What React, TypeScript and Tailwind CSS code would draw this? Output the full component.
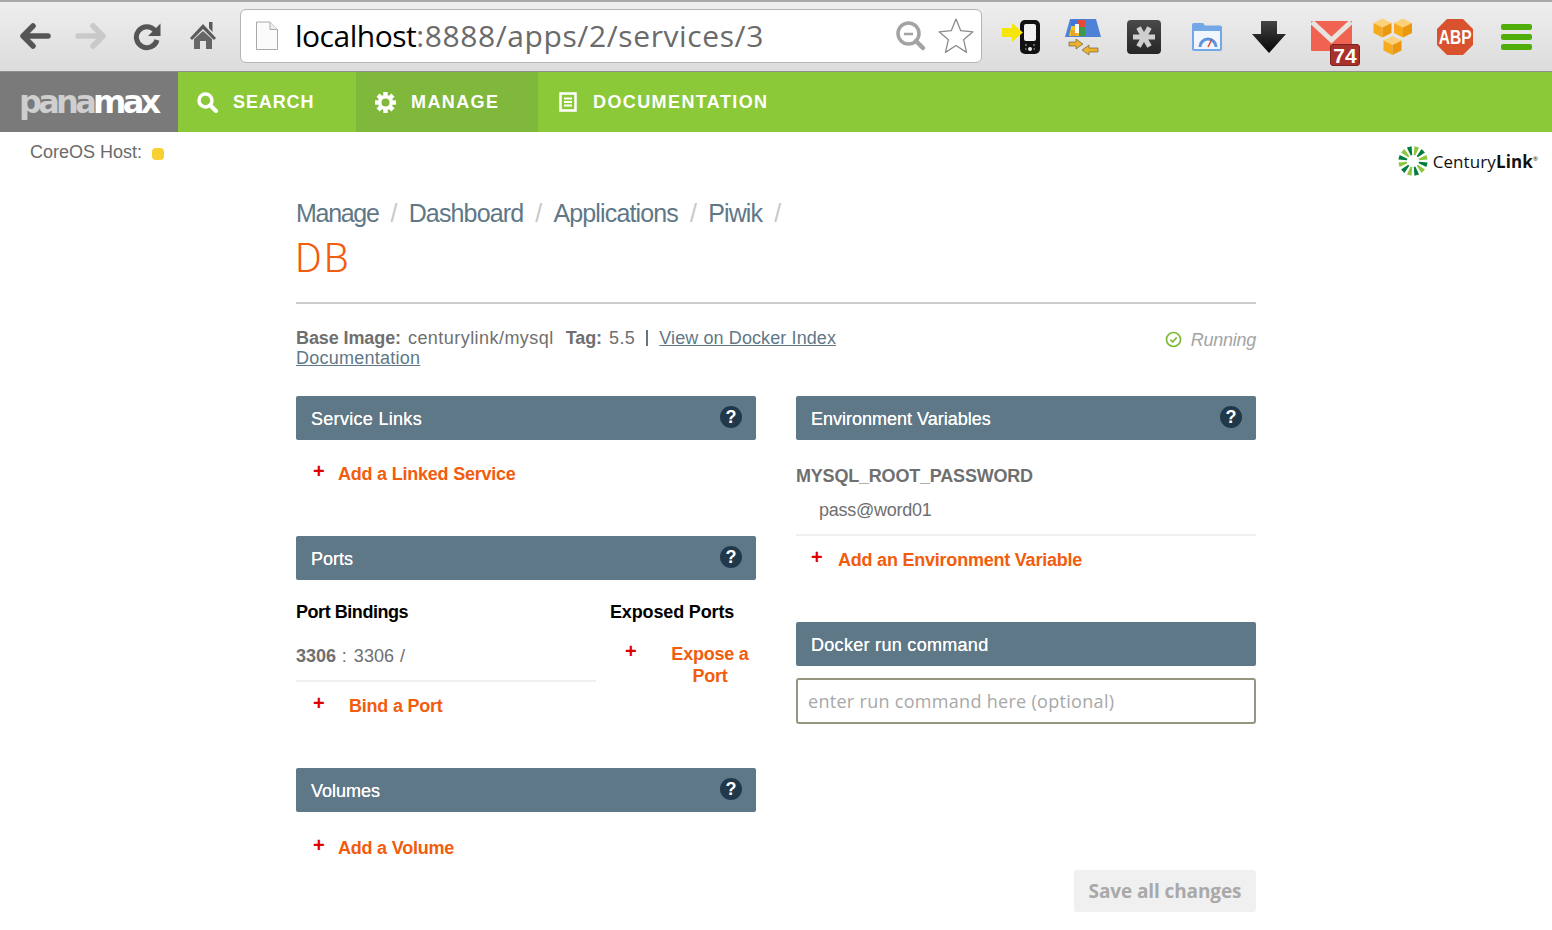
const sans = "font-['Liberation_Sans',Arial,sans-serif]";

function BackArrow({ color }: { color: string }) {
  return (
    <svg width="34" height="30" viewBox="0 0 34 30" fill="none">
      <path d="M15 5 L5 15 L15 25 M6 15 H30" stroke={color} strokeWidth="5.5" strokeLinecap="round" strokeLinejoin="round" />
    </svg>
  );
}

function ForwardArrow() {
  return (
    <svg width="34" height="30" viewBox="0 0 34 30" fill="none">
      <path d="M19 5 L29 15 L19 25 M28 15 H4" stroke="#c9c9c9" strokeWidth="5.5" strokeLinecap="round" strokeLinejoin="round" />
    </svg>
  );
}

function Reload() {
  return (
    <svg width="30" height="30" viewBox="0 0 30 30" fill="none">
      <path d="M23 9.5 A10.5 10.5 0 1 0 25 19" stroke="#555" strokeWidth="5" />
      <path d="M28.5 2.5 V15 H16 Z" fill="#555" />
    </svg>
  );
}

function Home() {
  return (
    <svg width="28" height="30" viewBox="0 0 28 30">
      <path d="M14 3 L27 17 L25 19 L14 8 L3 19 L1 17 Z" fill="#5a5a5a" />
      <path d="M20 1 H23.5 V11 L20 7 Z" fill="#5a5a5a" />
      <path d="M5 18 L14 10 L23 18 V28 H17 V20 H11 V28 H5 Z" fill="#666" />
    </svg>
  );
}

function PageIcon() {
  return (
    <svg width="24" height="30" viewBox="0 0 24 30" fill="none">
      <path d="M1.5 1 H15 L22.5 8.5 V28.5 H1.5 Z" fill="#fbfbfb" stroke="#aaa" />
      <path d="M15 1 V8.5 H22.5" fill="#eee" stroke="#aaa" />
    </svg>
  );
}

function ZoomOut() {
  return (
    <svg width="32" height="32" viewBox="0 0 32 32" fill="none">
      <circle cx="13.5" cy="13.5" r="10.5" stroke="#a3a3a3" strokeWidth="3.5" />
      <path d="M9 14 H18" stroke="#a3a3a3" strokeWidth="2.5" />
      <path d="M21 21 L28 28" stroke="#a3a3a3" strokeWidth="4.5" strokeLinecap="round" />
    </svg>
  );
}

function StarOutline() {
  return (
    <svg width="38" height="38" viewBox="0 0 36 36" fill="#fff">
      <path d="M18 2 L22.5 13 L34 14 L25.2 21.5 L28 33.5 L18 27 L8 33.5 L10.8 21.5 L2 14 L13.5 13 Z" stroke="#8a8a8a" strokeWidth="1.2" strokeLinejoin="round" />
    </svg>
  );
}

function PhoneIcon() {
  return (
    <svg width="40" height="36" viewBox="0 0 40 36">
      <rect x="19" y="1" width="20" height="34" rx="5" fill="#111" />
      <rect x="23" y="5" width="12" height="17" rx="2" fill="#f1f1f1" />
      <circle cx="29" cy="30" r="2" fill="#eee" />
      <path d="M24 26 H26 M32 26 H34 M24 30 H25.5 M32.5 30 H34" stroke="#bbb" strokeWidth="1.2" />
      <path d="M1 9 H11 V4 L22 13.5 L11 23 V18 H1 Z" fill="#f5e607" />
    </svg>
  );
}

function TranslateIcon() {
  return (
    <svg width="40" height="38" viewBox="0 0 40 38">
      <path d="M7 1 H33 L38 19 H2 Z" fill="#4f82d6" />
      <path d="M8 2 H19 V8 H14 V12 H19 V18 H6 L8 10 Z" fill="#f3c423" />
      <rect x="8" y="2" width="7" height="6" fill="#3f78d8" />
      <rect x="15" y="2" width="7" height="7" fill="#e24b3a" />
      <rect x="8" y="12" width="6" height="6" fill="#e9a52a" />
      <rect x="16" y="9" width="6" height="9" fill="#3e9a48" />
      <rect x="12" y="6" width="4" height="9" fill="#fff" />
      <path d="M6 24 H13 V21 L20 26 L13 31 V28 H6 Z" fill="#edb12b" stroke="#555" strokeWidth=".6" />
      <path d="M35 30 H26 V27 L19 32 L26 37 V34 H35 Z" fill="#edb12b" stroke="#555" strokeWidth=".6" />
    </svg>
  );
}

function AsteriskBox() {
  return (
    <svg width="36" height="36" viewBox="0 0 36 36">
      <defs>
        <linearGradient id="box" x1="0" y1="0" x2="0" y2="1">
          <stop offset="0" stopColor="#4a4a4a" />
          <stop offset="1" stopColor="#262626" />
        </linearGradient>
      </defs>
      <rect x="1" y="1" width="34" height="34" rx="4" fill="url(#box)" />
      <path d="M7 18 H29 M12.5 8.5 L23.5 27.5 M23.5 8.5 L12.5 27.5" stroke="#cfcfcf" strokeWidth="5" />
    </svg>
  );
}

function SpeedWindow() {
  return (
    <svg width="32" height="30" viewBox="0 0 32 30" fill="none">
      <path d="M1 3 Q1 1 3 1 H12 L14 3.5 H29 Q31 3.5 31 5.5 V27 Q31 29 29 29 H3 Q1 29 1 27 Z" fill="#73a7e6" />
      <rect x="3" y="9" width="26" height="18" fill="#f0f6fd" />
      <path d="M9 25 A8 8 0 0 1 25 25" stroke="#5d93d9" strokeWidth="3" />
      <path d="M17 25 L21 17" stroke="#d9503c" strokeWidth="1.5" />
    </svg>
  );
}

function DownArrow() {
  return (
    <svg width="36" height="34" viewBox="0 0 36 34">
      <defs>
        <linearGradient id="down" x1="0" y1="0" x2="0" y2="1">
          <stop offset="0" stopColor="#444" />
          <stop offset="1" stopColor="#050505" />
        </linearGradient>
      </defs>
      <path d="M10 1 H26 V14 H35 L18 33 L1 14 H10 Z" fill="url(#down)" />
    </svg>
  );
}

function MailIcon() {
  return (
    <div className="relative w-[50px] h-[45px]">
      <svg width="41" height="31" viewBox="0 0 41 31" className="absolute left-0 top-0">
        <rect x="0" y="0" width="41" height="30" rx="1" fill="#ef6350" />
        <path d="M1 1 L20.5 19 L40 1" fill="none" stroke="#e8e3df" strokeWidth="5" />
      </svg>
      <div className={`absolute left-[19px] top-[23px] w-[30px] h-[22px] rounded-[3px] bg-[#a8322b] border border-[#7d2420] flex items-center justify-center text-white text-[21px] font-bold leading-none ${sans}`}>
        74
      </div>
    </div>
  );
}

function AwsBoxes() {
  const box = (x: number, y: number) => (
    <g key={`${x}-${y}`} transform={`translate(${x} ${y})`}>
      <path d="M0 4.5 L9 0 L18 4.5 L9 9 Z" fill="#fbd27a" />
      <path d="M0 4.5 L9 9 V19 L0 14.5 Z" fill="#f6ab1c" />
      <path d="M18 4.5 L9 9 V19 L18 14.5 Z" fill="#eb980f" />
    </g>
  );
  return (
    <svg width="40" height="38" viewBox="0 0 40 38">
      {box(0.5, 0.5)}
      {box(21, 0.5)}
      {box(10.5, 18)}
    </svg>
  );
}

function AbpIcon() {
  return (
    <div className={`relative w-[38px] h-[38px] flex items-center justify-center text-white text-[21px] font-bold ${sans}`}>
      <svg width="38" height="38" viewBox="0 0 38 38" className="absolute inset-0">
        <path d="M11 1 H27 L37 11 V27 L27 37 H11 L1 27 V11 Z" fill="#d9522e" />
      </svg>
      <span className="relative scale-x-[0.74]">ABP</span>
    </div>
  );
}

function MenuIcon() {
  return (
    <div className="flex flex-col gap-[4px] w-[31px]">
      <div className="h-[6px] rounded-[2px] bg-[#4fae0a]" />
      <div className="h-[6px] rounded-[2px] bg-[#4fae0a]" />
      <div className="h-[6px] rounded-[2px] bg-[#4fae0a]" />
    </div>
  );
}

function BrowserBar() {
  return (
    <div className="relative h-[72px] border-b border-[#8e8e8e] bg-gradient-to-b from-[#eeeeee] to-[#dcdcdc] border-t-2 border-t-[#a9a9a9] flex items-center">
      <div className="flex items-center w-[240px] pl-[18px] -mt-[1px]">
        <BackArrow color="#555555" />
        <div className="ml-[22px]"><ForwardArrow /></div>
        <div className="ml-[24px]"><Reload /></div>
        <div className="ml-[27px]"><Home /></div>
      </div>
      <div className="w-[742px] h-[54px] -mt-[1px] rounded-[6px] border border-[#b4b4b4] bg-white flex items-center pl-[14px] pr-[6px]">
        <PageIcon />
        <div className="ml-[16px] text-[30px] tracking-[0.6px] leading-none font-['Open_Sans',sans-serif] text-[#6a6a6a] flex-1">
          <span className="text-black tracking-[-0.5px]">localhost</span>:8888/apps/2/services/3
        </div>
        <ZoomOut />
        <div className="ml-[10px]"><StarOutline /></div>
      </div>
      <div className="flex-1 flex items-center pl-[19px]">
        <PhoneIcon />
        <div className="ml-[22px]"><TranslateIcon /></div>
        <div className="ml-[23px]"><AsteriskBox /></div>
        <div className="ml-[29px]"><SpeedWindow /></div>
        <div className="ml-[28px]"><DownArrow /></div>
        <div className="ml-[24px] -mb-[14px]"><MailIcon /></div>
        <div className="ml-[12px]"><AwsBoxes /></div>
        <div className="ml-[23px]"><AbpIcon /></div>
        <div className="ml-[27px]"><MenuIcon /></div>
      </div>
    </div>
  );
}

function SearchGlyph() {
  return (
    <svg width="21" height="21" viewBox="0 0 21 21" fill="none">
      <circle cx="8.5" cy="8.5" r="6.5" stroke="#fff" strokeWidth="3.5" />
      <path d="M13.5 13.5 L19 19" stroke="#fff" strokeWidth="4" strokeLinecap="round" />
    </svg>
  );
}

function GearGlyph() {
  const teeth = [0, 45, 90, 135, 180, 225, 270, 315];
  return (
    <svg width="21" height="21" viewBox="-10.5 -10.5 21 21" fill="none">
      <circle r="5.8" stroke="#fff" strokeWidth="3.6" />
      {teeth.map((a) => (
        <rect key={a} x="-2.2" y="-10.5" width="4.4" height="4" fill="#fff" transform={`rotate(${a})`} />
      ))}
    </svg>
  );
}

function DocIcon() {
  return (
    <svg width="20" height="20" viewBox="0 0 20 20" fill="none">
      <rect x="2.5" y="1.5" width="15" height="17" stroke="#fff" strokeWidth="2.5" />
      <path d="M6 6.5 H14 M6 10 H14 M6 13.5 H14" stroke="#fff" strokeWidth="2" />
    </svg>
  );
}

function TopNav() {
  return (
    <nav className={`h-[60px] bg-[#8cc938] flex text-white text-[18px] font-bold tracking-[1.4px] ${sans}`}>
      <div className="w-[178px] bg-[#7a7a7a] flex items-center pl-[19px]">
        <span className="text-[32px] leading-none tracking-[-3.7px] font-['DejaVu_Sans',sans-serif] font-bold text-white">
          <span className="text-[#cfcfcf]">pana</span>max
        </span>
      </div>
      <div className="w-[178px] flex items-center pl-[19px] gap-[15px]">
        <SearchGlyph />
        <span className="tracking-[0.9px]">SEARCH</span>
      </div>
      <div className="w-[182px] bg-[#7fb83a] flex items-center pl-[19px] gap-[15px]">
        <GearGlyph />
        <span>MANAGE</span>
      </div>
      <div className="flex items-center pl-[20px] gap-[15px]">
        <DocIcon />
        <span>DOCUMENTATION</span>
      </div>
    </nav>
  );
}

function CenturyLogo() {
  const rays = Array.from({ length: 12 }, (_, i) => i * 30 + 15);
  return (
    <div className="flex items-center gap-[5px]">
      <svg width="30" height="30" viewBox="-15 -15 30 30">
        {rays.map((a, i) => (
          <path
            key={a}
            d="M-2.4 -14.5 H2.4 L0.8 -6 H-0.8 Z"
            fill={i % 2 === 0 ? "#8cc63f" : "#007c3e"}
            transform={`rotate(${a})`}
          />
        ))}
      </svg>
      <span className="text-[17px] tracking-[0.1px] leading-none text-[#111] font-['Open_Sans',sans-serif]">
        Century<span className="font-bold">Link</span>
        <span className="text-[6px] align-super">®</span>
      </span>
    </div>
  );
}

function HelpDot() {
  return (
    <span className={`w-[22px] h-[22px] rounded-full bg-[#20384a] text-white text-[18px] font-bold leading-none flex items-center justify-center -mt-[2px] ${sans}`}>
      ?
    </span>
  );
}

function PanelHeader({ title, help = true, wide = false }: { title: string; help?: boolean; wide?: boolean }) {
  return (
    <div className="h-[44px] rounded-[2px] bg-[#5f7887] pl-[15px] pr-[14px] flex items-center justify-between text-white text-[18px]">
      <span className={`pt-[3px] [text-shadow:0_0_0.5px_#fff] ${wide ? "tracking-[0.3px]" : "tracking-[0px]"}`}>{title}</span>
      {help && <HelpDot />}
    </div>
  );
}

function AddLink({ label, gap, className = "" }: { label: string; gap: string; className?: string }) {
  return (
    <div className={`flex items-start text-[#f25c0d] font-bold text-[18px] tracking-[-0.22px] leading-[22px] ${className}`}>
      <span className={`text-[#e00000] text-[20px] leading-[16px] ${gap}`}>+</span>
      <span>{label}</span>
    </div>
  );
}

export default function App() {
  return (
    <div className={`h-[930px] overflow-hidden bg-white ${sans}`}>
      <BrowserBar />
      <TopNav />

      <div className="flex justify-between h-[66px] pl-[30px] pr-[14px]">
        <div className="flex items-center h-[40px] text-[18px] tracking-[0px] text-[#6a6a6a]">
          CoreOS Host:
          <span className="ml-[10px] mt-[3px] w-[12px] h-[12px] rounded-[4px] bg-[#f8d02f]" />
        </div>
        <div className="mt-[14px]"><CenturyLogo /></div>
      </div>

      <main className="w-[960px] mx-auto">
        <div className="flex h-[32px] items-center text-[25px] tracking-[-0.85px] text-[#5f7887]">
          <span className="tracking-[-1.3px]">Manage</span>
          <span className="mx-[12px] text-[#c8c8c8]">/</span>
          <span>Dashboard</span>
          <span className="mx-[12px] text-[#c8c8c8]">/</span>
          <span>Applications</span>
          <span className="mx-[12px] text-[#c8c8c8]">/</span>
          <span>Piwik</span>
          <span className="mx-[12px] text-[#c8c8c8]">/</span>
        </div>
        <h1 className="h-[56px] pt-[4px] -ml-[1px] text-[41px] leading-[48px] tracking-[2px] font-['Roboto',sans-serif] font-light text-[#f25c0d]">DB</h1>
        <div className="h-[2px] mt-[16px] bg-[#cccccc]" />

        <div className="flex justify-between mt-[24px] h-[68px] text-[18px] leading-[20px] text-[#6f6f6f]">
          <div>
            <div className="flex">
              <b className="font-bold tracking-[-0.1px]">Base Image:</b>
              <span className="ml-[7px] tracking-[0.45px]">centurylink/mysql</span>
              <b className="font-bold ml-[12px] tracking-[-0.1px]">Tag:</b>
              <span className="ml-[7px] tracking-[0.45px]">5.5</span>
              <span className="w-[2px] h-[16px] mt-[2px] bg-[#5f7887] mx-[11px]" />
              <a className="text-[#5f7887] underline tracking-[0.1px]">View on Docker Index</a>
            </div>
            <a className="text-[#5f7887] underline tracking-[0.25px]">Documentation</a>
          </div>
          <div className="flex items-start gap-[9px] pt-[2px] italic text-[#a3a3a3] tracking-[-0.25px]">
            <svg width="17" height="17" viewBox="0 0 17 17" fill="none" className="mt-[1px]">
              <circle cx="8.5" cy="8.5" r="7" stroke="#7fbb3a" strokeWidth="1.7" />
              <path d="M5.3 8.7 L7.7 11 L11.7 6.4" stroke="#7fbb3a" strokeWidth="1.7" />
            </svg>
            Running
          </div>
        </div>

        <div className="grid grid-cols-2 gap-x-[40px]">
          <section>
            <PanelHeader title="Service Links" wide />
            <AddLink label="Add a Linked Service" gap="w-[25px]" className="mt-[23px] ml-[17px]" />

            <div className="mt-[51px]"><PanelHeader title="Ports" /></div>
            <div className="flex mt-[21px]">
              <div className="w-[314px]">
                <div className="text-[18px] leading-[22px] font-bold tracking-[-0.45px] text-black">Port Bindings</div>
                <div className="flex w-[300px] h-[48px] mt-[11px] pt-[11px] border-b-2 border-[#f0f0f0] text-[18px] leading-[22px] text-[#6f6f6f]">
                  <b className="tracking-[-0.05px]">3306</b>
                  <span className="ml-[6px]">:</span>
                  <span className="ml-[7px] tracking-[0.05px]">3306</span>
                  <span className="ml-[6px]">/</span>
                </div>
                <AddLink label="Bind a Port" gap="w-[36px]" className="mt-[13px] ml-[17px]" />
              </div>
              <div className="flex-1">
                <div className="text-[18px] leading-[22px] font-bold tracking-[-0.15px] text-black">Exposed Ports</div>
                <div className="flex items-start mt-[20px] pl-[15px] text-[#f25c0d] font-bold text-[18px] leading-[22px] tracking-[-0.22px]">
                  <span className="text-[#e00000] text-[20px] leading-[16px] w-[39px]">+</span>
                  <span className="flex-1 text-center">Expose a Port</span>
                </div>
              </div>
            </div>

            <div className="mt-[51px]"><PanelHeader title="Volumes" /></div>
            <AddLink label="Add a Volume" gap="w-[25px]" className="mt-[25px] ml-[17px]" />
          </section>

          <section>
            <PanelHeader title="Environment Variables" />
            <div className="mt-[25px] text-[18px] leading-[22px] font-bold tracking-[-0.2px] text-[#6f6f6f]">MYSQL_ROOT_PASSWORD</div>
            <div className="h-[37px] mt-[12px] pl-[23px] border-b-2 border-[#f0f0f0] text-[18px] leading-[22px] tracking-[-0.25px] text-[#6f6f6f]">pass@word01</div>
            <AddLink label="Add an Environment Variable" gap="w-[27px]" className="mt-[13px] ml-[15px]" />

            <div className="mt-[51px]"><PanelHeader title="Docker run command" help={false} wide /></div>
            <input
              readOnly
              placeholder="enter run command here (optional)"
              className="block w-full h-[46px] mt-[12px] px-[10px] rounded-[3px] border-2 border-[#96957f] bg-white text-[18px] tracking-[0.3px] font-['Open_Sans',sans-serif] placeholder:text-[#a8a8a8]"
            />
            <div className="flex justify-end mt-[146px]">
              <button className="w-[182px] h-[42px] rounded-[3px] bg-[#f0f0f0] text-[#a9a9a9] text-[19px] font-bold tracking-[-0.1px] font-['Open_Sans',sans-serif]">
                Save all changes
              </button>
            </div>
          </section>
        </div>
      </main>
    </div>
  );
}
